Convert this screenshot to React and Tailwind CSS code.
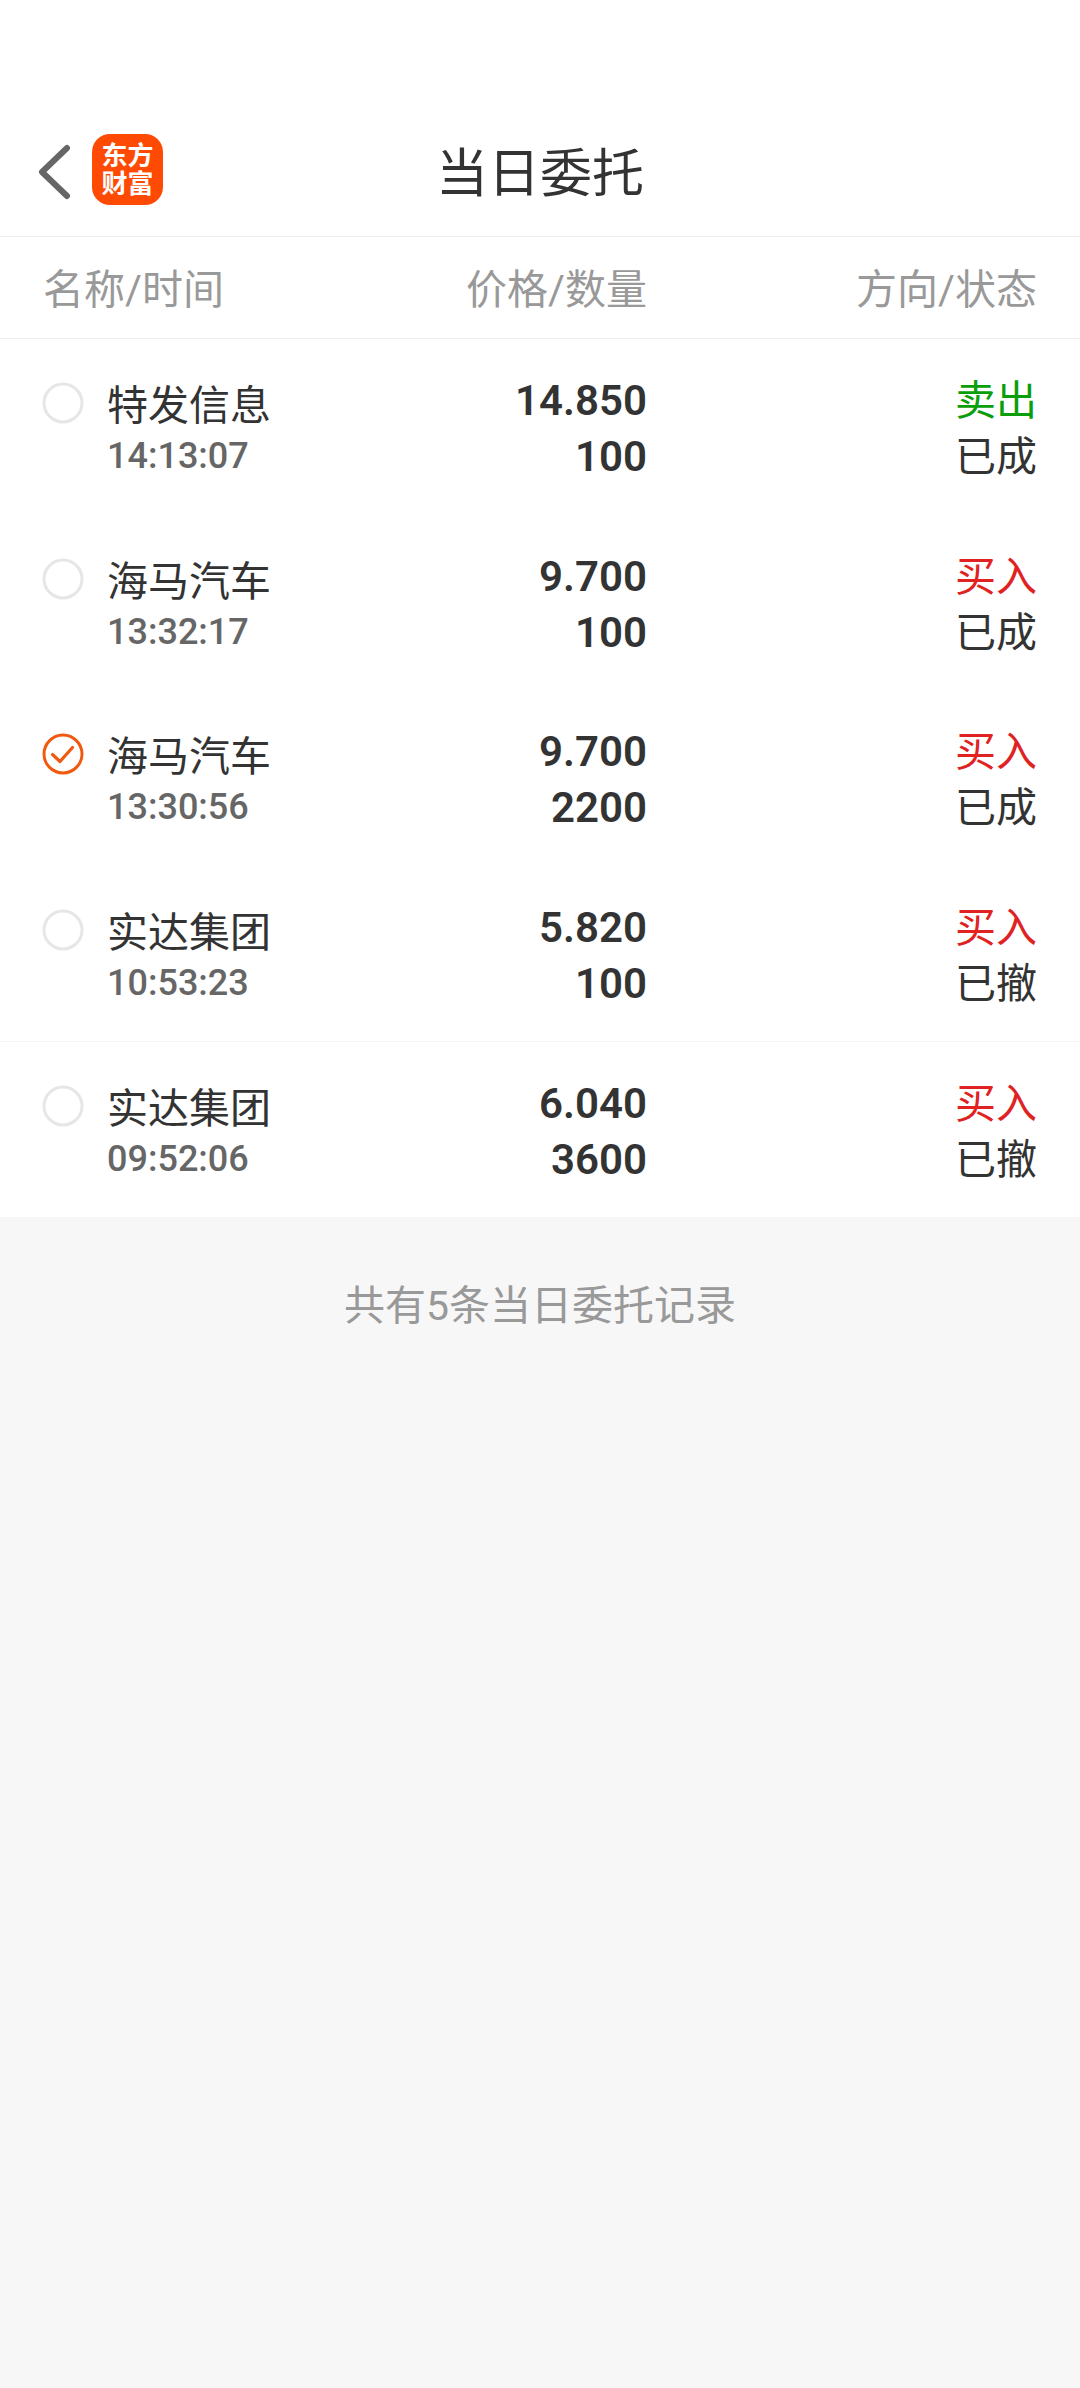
import React from 'react';

const ORDERS = [
  { name: '特发信息', time: '14:13:07', price: '14.850', qty: '100', side: '卖出', status: '已成' },
  { name: '海马汽车', time: '13:32:17', price: '9.700', qty: '100', side: '买入', status: '已成' },
  { name: '海马汽车', time: '13:30:56', price: '9.700', qty: '2200', side: '买入', status: '已成', checked: true },
  { name: '实达集团', time: '10:53:23', price: '5.820', qty: '100', side: '买入', status: '已撤' },
  { name: '实达集团', time: '09:52:06', price: '6.040', qty: '3600', side: '买入', status: '已撤', divider: true },
];

function Radio({ checked }) {
  return (
    <svg width="42" height="42" viewBox="0 0 42 42" className="shrink-0">
      <circle cx="21" cy="21" r="19" fill="none" strokeWidth="3" stroke={checked ? '#f0590f' : '#e6e6e6'} />
      {checked && (
        <path d="M10.5 21.5 L18 28.5 L30.5 14.5" fill="none" stroke="#f0590f" strokeWidth="3.2" strokeLinecap="round" strokeLinejoin="round" />
      )}
    </svg>
  );
}

function OrderRow({ order }) {
  return (
    <div className={`flex h-[175.6px] pl-[43px] pr-[43px] ${order.divider ? 'border-t border-[#f5f5f5]' : ''}`}>
      <div className="mt-[43px] -ml-px">
        <Radio checked={order.checked} />
      </div>
      <div className="ml-[23px] w-[309px] pt-[39px]">
        <div className="text-[41px] leading-[56px] text-[#333333]">{order.name}</div>
        <div className="text-[36px] leading-[44px] font-medium text-[#666666]">{order.time}</div>
      </div>
      <div className="w-[231px] pt-[34px] text-right text-[42px] leading-[56px] font-semibold text-[#333333]">
        <div>{order.price}</div>
        <div>{order.qty}</div>
      </div>
      <div className="flex-1 pt-[34px] text-right text-[41px] leading-[56px]">
        <div className={order.side === '卖出' ? 'text-[#0a9e0a]' : 'text-[#e02222]'}>{order.side}</div>
        <div className="text-[#333333]">{order.status}</div>
      </div>
    </div>
  );
}

export default function App() {
  return (
    <div className="flex min-h-[2388px] flex-col bg-[#f7f7f7] font-['Roboto','Noto_Sans_CJK_SC',sans-serif]">
      <div className="bg-white">
        {/* top bar */}
        <div className="relative flex h-[237px] items-end border-b border-[#eeeeee] bg-white pb-[31px]">
          <svg width="34" height="56" viewBox="0 0 34 56" className="mb-[5px] ml-[37px] shrink-0">
            <path d="M30 4 L5 28 L30 52" fill="none" stroke="#666666" strokeWidth="6" strokeLinecap="round" strokeLinejoin="round" />
          </svg>
          <div className="ml-[21px] flex h-[71px] w-[71px] shrink-0 flex-col items-center justify-center rounded-[18px] bg-[#ff4a03] text-[26px] leading-[28px] font-bold text-white">
            <span>东方</span>
            <span>财富</span>
          </div>
          <div className="absolute inset-x-0 bottom-[26px] text-center text-[52px] leading-[70px] text-[#333333]">当日委托</div>
        </div>

        {/* column titles */}
        <div className="flex h-[102px] items-center border-b border-[#eeeeee] px-[43px] pt-[7px] text-[41px] text-[#999999]">
          <div className="w-[373px]">名称/时间</div>
          <div className="w-[231px] text-right">价格/数量</div>
          <div className="flex-1 text-right">方向/状态</div>
        </div>

        {ORDERS.map((order) => (
          <OrderRow key={order.time} order={order} />
        ))}
      </div>

      <div className="mt-[60px] text-center text-[41px] leading-[58px] text-[#999999]">共有5条当日委托记录</div>
    </div>
  );
}
